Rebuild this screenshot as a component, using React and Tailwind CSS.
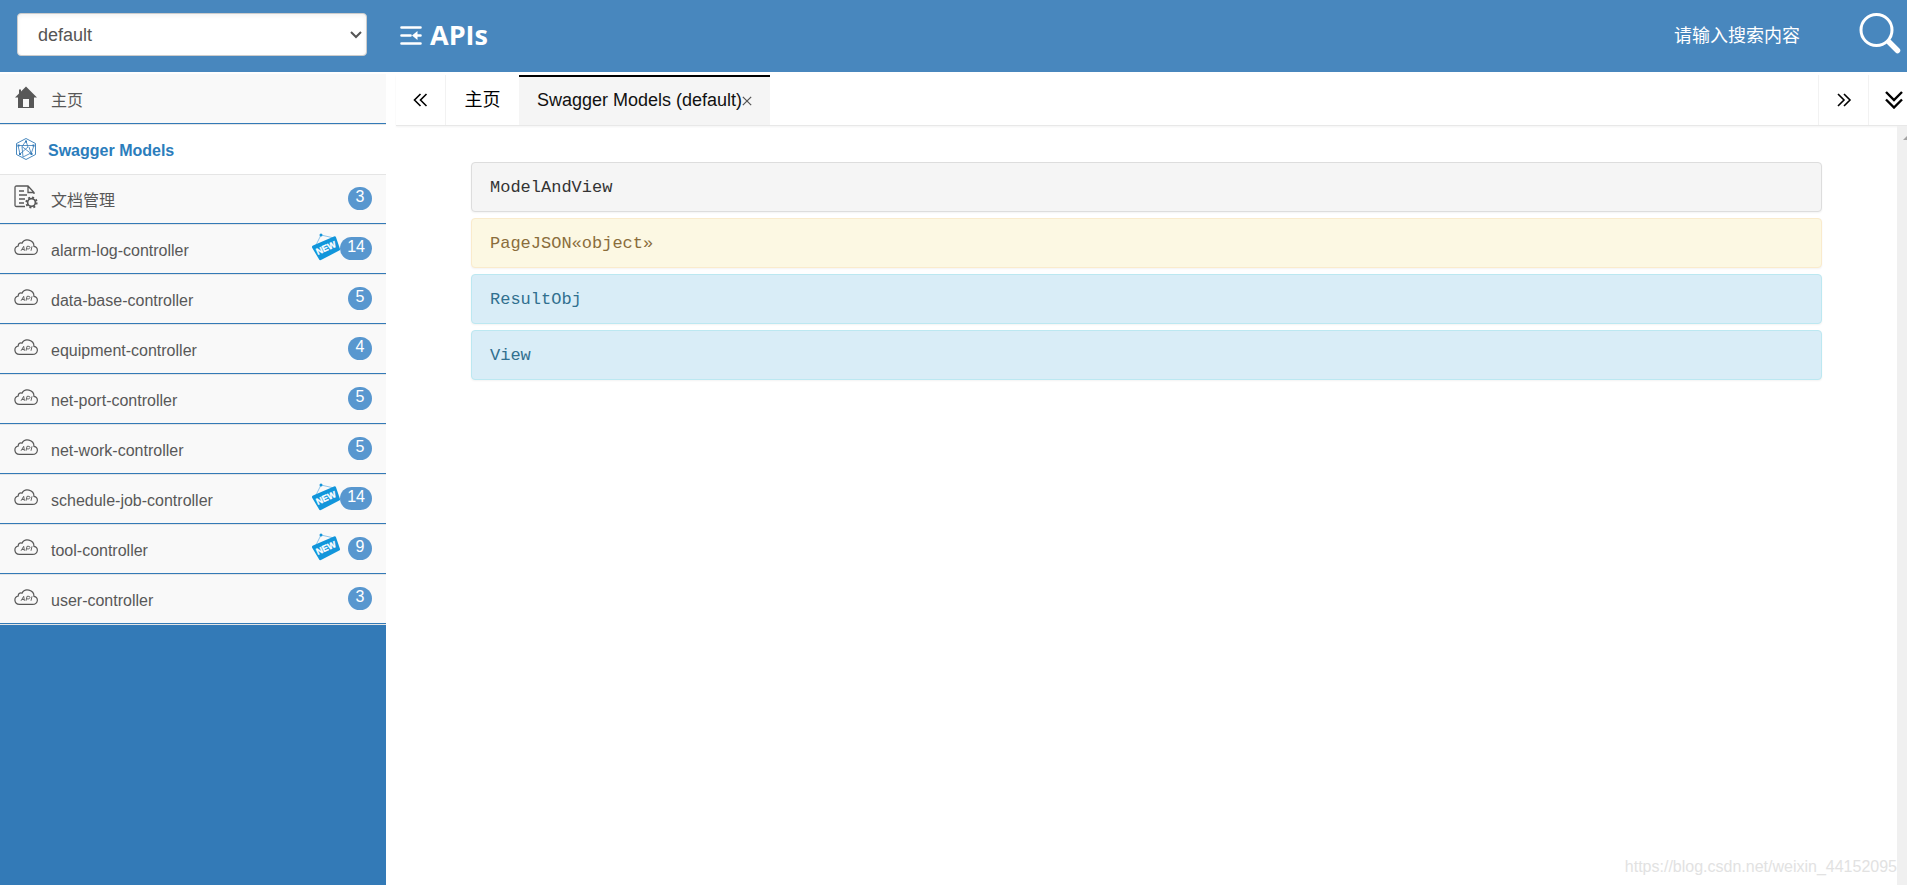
import { useState } from 'react';

const controllers = [
  { name: 'alarm-log-controller', count: 14, isNew: true },
  { name: 'data-base-controller', count: 5 },
  { name: 'equipment-controller', count: 4 },
  { name: 'net-port-controller', count: 5 },
  { name: 'net-work-controller', count: 5 },
  { name: 'schedule-job-controller', count: 14, isNew: true },
  { name: 'tool-controller', count: 9, isNew: true },
  { name: 'user-controller', count: 3 },
];

const models = [
  { name: 'ModelAndView', tone: 'border-[#dddddd] bg-[#f5f5f5] text-[#333333]' },
  { name: 'PageJSON«object»', tone: 'border-[#faebcc] bg-[#fcf8e3] text-[#8a6d3b]' },
  { name: 'ResultObj', tone: 'border-[#bce8f1] bg-[#d9edf7] text-[#31708f]' },
  { name: 'View', tone: 'border-[#bce8f1] bg-[#d9edf7] text-[#31708f]' },
];

function HomeIcon() {
  return (
    <svg className="h-6 w-6" viewBox="0 0 24 24" fill="#585858" aria-hidden="true">
      <path fillRule="evenodd" d="M12 1.500 23 12.500h-3V23H4V12.500H1L5 8.500V4.500h2v2ZM9 14v8h6v-8Z" />
    </svg>
  );
}

function ModelsIcon() {
  return (
    <svg className="h-6 w-6" viewBox="0 0 24 24" fill="none" stroke="#337ab7" strokeWidth="0.900" aria-hidden="true">
      <path d="M12 1.500 21.500 6.500v11L12 22.500 2.500 17.500v-11Z" />
      <path d="M4 8.500h16M12 4 8 9.500l9 7M12 4l2 6-8 7M8 9.500 9 20l8-4-2-6M4 8.500 6 17M20 8.500 17 17" strokeWidth="0.800" />
      <path d="M11 3.500h2v2h-2zM5 16h2v2H5zM16.500 16h2v2h-2zM3.500 7.500h2v2h-2zM18.500 7.500h2v2h-2z" fill="#337ab7" stroke="none" />
    </svg>
  );
}

function DocsIcon() {
  return (
    <svg className="h-6 w-6" viewBox="0 0 24 24" fill="none" stroke="#585858" strokeWidth="1.300" aria-hidden="true">
      <path d="M11 21.500H2.500c-1 0-1.500-.500-1.500-1.500V2.500C1 1.500 1.500 1 2.500 1H14l6 6.500v1.500M14 1v6.500h6M5 6h5M5 10h8M5 14h6M5 18h5" />
      <circle cx="17.500" cy="17.500" r="3.900" strokeWidth="1.700" />
      <circle cx="17.500" cy="17.500" r="5.200" strokeWidth="1.800" strokeDasharray="2 2.080" />
    </svg>
  );
}

function ApiCloudIcon() {
  return (
    <svg className="h-6 w-6" viewBox="0 0 24 24" fill="none" stroke="#585858" strokeWidth="1.200" aria-hidden="true">
      <path d="M5.500 19.400h13c6 0 6.300-7 1.500-8 0-7-9.500-8.500-12-3.200-2.300-.800-4 .800-3.700 2.800-4.700 1-4.700 7.800 1.200 8.400Z" />
      <path d="m7 15.800 2.700-4.500.7 4.500M8 14.500h2.300M12 15.800l1-4.500h2c1.600.300 1 2.500-.5 2.600h-1.800M17 15.800l1-4.500" strokeWidth="0.900" />
    </svg>
  );
}

function NewTag() {
  return (
    <svg className="h-7 w-7" viewBox="0 0 28 28" aria-hidden="true">
      <path d="M4 12 9 2l13 3" fill="none" stroke="#8fc4ea" strokeWidth="1" />
      <circle cx="9" cy="2" r="1.500" fill="#1296db" />
      <path d="M1 12.500 22 3.500q1.500-.500 2 .800L28 16q.300 1-.800 1.600L9 27q-1.500.500-2-.700L0 14.500q-.300-1.300 1-2Z" fill="#1296db" />
      <text
        x="14"
        y="18"
        textAnchor="middle"
        transform="rotate(-24 14 15)"
        className="font-['Liberation_Sans',sans-serif] text-[9px] font-bold"
        fill="#ffffff"
        stroke="#ffffff"
        strokeWidth="0.300"
      >
        NEW
      </text>
    </svg>
  );
}

function Chevrons({ className, d }) {
  return (
    <svg className={className} viewBox="0 0 18 18" fill="none" stroke="currentColor" aria-hidden="true">
      <path d={d} />
    </svg>
  );
}

function SidebarItem({ icon, label, count, isNew, active }) {
  return (
    <li
      className={
        active
          ? 'border-t border-b border-t-[#e5e5e5] border-b-white bg-white'
          : 'border-t border-b border-t-[#e5e5e5] border-b-[#337ab7] bg-[#f9f9f9] first:border-t-[#f9f9f9]'
      }
    >
      <a href="#" className="flex h-12 items-center px-3.5">
        <span className={active ? 'shrink-0' : 'mb-1 shrink-0'}>{icon}</span>
        <span className={active ? 'ml-2.5 pt-1 font-bold text-[#2b7dbc]' : 'ml-[13px] pt-1 text-[#585858]'}>{label}</span>
        {isNew && <span className="mb-1 ml-auto"><NewTag /></span>}
        {count && (
          <span className={isNew ? 'mb-0.5 flex w-8 justify-end' : 'mb-0.5 ml-auto flex w-8 justify-end'}>
            <span className="h-[23px] min-w-6 rounded-full bg-[#5897cf] px-[7px] text-center leading-[19px] text-white">
              {count}
            </span>
          </span>
        )}
      </a>
    </li>
  );
}

function Header() {
  const [group, setGroup] = useState('default');

  return (
    <header className="flex h-[72px] items-center bg-[#4887be]">
      <div className="relative mb-1 ml-[17px] w-[350px] shrink-0">
        <select
          aria-label="API group"
          value={group}
          onChange={(e) => setGroup(e.target.value)}
          className="h-[43px] w-full appearance-none rounded border border-[#cccccc] bg-white px-5 pt-0.5 text-lg text-[#555555] shadow-inner"
        >
          <option value="default">default</option>
        </select>
        <svg className="pointer-events-none absolute top-3.5 right-1 h-3.5 w-3.5" viewBox="0 0 14 14" fill="none" stroke="#555555" strokeWidth="2" aria-hidden="true">
          <path d="m2 5 5 5 5-5" />
        </svg>
      </div>
      <button type="button" aria-label="Toggle menu" className="ml-[33px] text-white">
        <svg className="h-[22px] w-[22px]" viewBox="0 0 22 22" fill="none" stroke="currentColor" strokeWidth="2.600" aria-hidden="true">
          <path d="M1.500 2.500h19M1.500 10.500h9M1.500 18.500h19M15 10.500h5.500" strokeLinecap="round" />
          <path d="m12 10.500 5.500-4.500v9Z" fill="currentColor" stroke="none" />
        </svg>
      </button>
      <h1 className="mb-0.5 ml-2 font-['Open_Sans',sans-serif] text-[27px] font-bold text-white">APIs</h1>
      <input
        type="text"
        aria-label="搜索"
        placeholder="请输入搜索内容"
        className="ml-auto w-[158px] bg-transparent text-lg text-white outline-none placeholder:text-white"
      />
      <button type="button" aria-label="搜索" className="mr-1.5 mb-2 ml-[25px] text-white">
        <svg className="h-11 w-11" viewBox="0 0 44 44" fill="none" stroke="currentColor" aria-hidden="true">
          <circle cx="19.500" cy="20" r="15.500" strokeWidth="3" />
          <path d="m32 32 8.500 8.500" strokeWidth="5.500" strokeLinecap="round" />
        </svg>
      </button>
    </header>
  );
}

export default function App() {
  return (
    <div className="flex min-h-screen flex-col overflow-hidden bg-white font-['Liberation_Sans','Noto_Sans_CJK_SC',sans-serif] text-base">
      <Header />
      <div className="flex flex-1">
        <aside className="mt-0.5 w-[386px] shrink-0 bg-[#337ab7]">
          <ul className="border-b border-[#e5e5e5]">
            <SidebarItem icon={<HomeIcon />} label="主页" />
            <SidebarItem icon={<ModelsIcon />} label="Swagger Models" active />
            <SidebarItem icon={<DocsIcon />} label="文档管理" count={3} />
            {controllers.map((c) => (
              <SidebarItem key={c.name} icon={<ApiCloudIcon />} label={c.name} count={c.count} isNew={c.isNew} />
            ))}
          </ul>
        </aside>

        <main className="flex min-w-0 flex-1 flex-col pt-[3px] pl-2.5">
          <nav className="flex h-[51px] border-b border-[#e8e8e8] text-lg text-black shadow-xs">
            <button type="button" aria-label="Scroll tabs left" className="flex w-[50px] items-center justify-center border-r border-[#f2f2f2]">
              <Chevrons className="h-[18px] w-[18px] stroke-[1.600]" d="M8.500 3l-6 6 6 6M14.500 3l-6 6 6 6" />
            </button>
            <button type="button" className="w-[73px]">主页</button>
            <div className="flex items-center border-t-2 border-black bg-[#f5f5f5] px-[18px] pb-0.5 text-[#111111]">
              <button type="button">Swagger Models (default)</button>
              <button type="button" aria-label="Close tab" className="pt-0.5">
                <svg className="h-2.5 w-2.5" viewBox="0 0 12 12" stroke="#555555" strokeWidth="1.500" aria-hidden="true">
                  <path d="m1 1 10 10M11 1 1 11" />
                </svg>
              </button>
            </div>
            <button type="button" aria-label="Scroll tabs right" className="ml-auto flex w-[50px] items-center justify-center border-l border-[#f2f2f2]">
              <Chevrons className="h-[18px] w-[18px] stroke-[1.600]" d="m3 3 6 6-6 6M9 3l6 6-6 6" />
            </button>
            <button type="button" aria-label="Tab actions" className="flex w-[39px] items-center justify-end border-l border-[#f2f2f2] pr-1">
              <Chevrons className="h-[18px] w-[18px] stroke-[2.400]" d="m1 1 8 8 8-8M1 8.500l8 8 8-8" />
            </button>
          </nav>

          <div className="flex flex-1">
            <section className="relative flex-1 px-[75px] pt-9">
              <ul className="flex flex-col gap-1.5">
                {models.map((m) => (
                  <li
                    key={m.name}
                    className={`flex h-[50px] items-center rounded border px-[18px] pt-0.5 font-['Liberation_Mono',monospace] text-[17px] shadow-xs ${m.tone}`}
                  >
                    {m.name}
                  </li>
                ))}
              </ul>
              <span className="absolute right-0 bottom-1.5 text-[#e2e2e2]">https://blog.csdn.net/weixin_44152095</span>
            </section>
            <div className="w-2.5 shrink-0 overflow-hidden bg-[#f0f0f0] pt-2.5">
              <svg className="ml-1.5 h-1 w-2" viewBox="0 0 8 4" fill="#a3a3a3" aria-hidden="true">
                <path d="M0 4 4 0l4 4Z" />
              </svg>
            </div>
          </div>
        </main>
      </div>
    </div>
  );
}
